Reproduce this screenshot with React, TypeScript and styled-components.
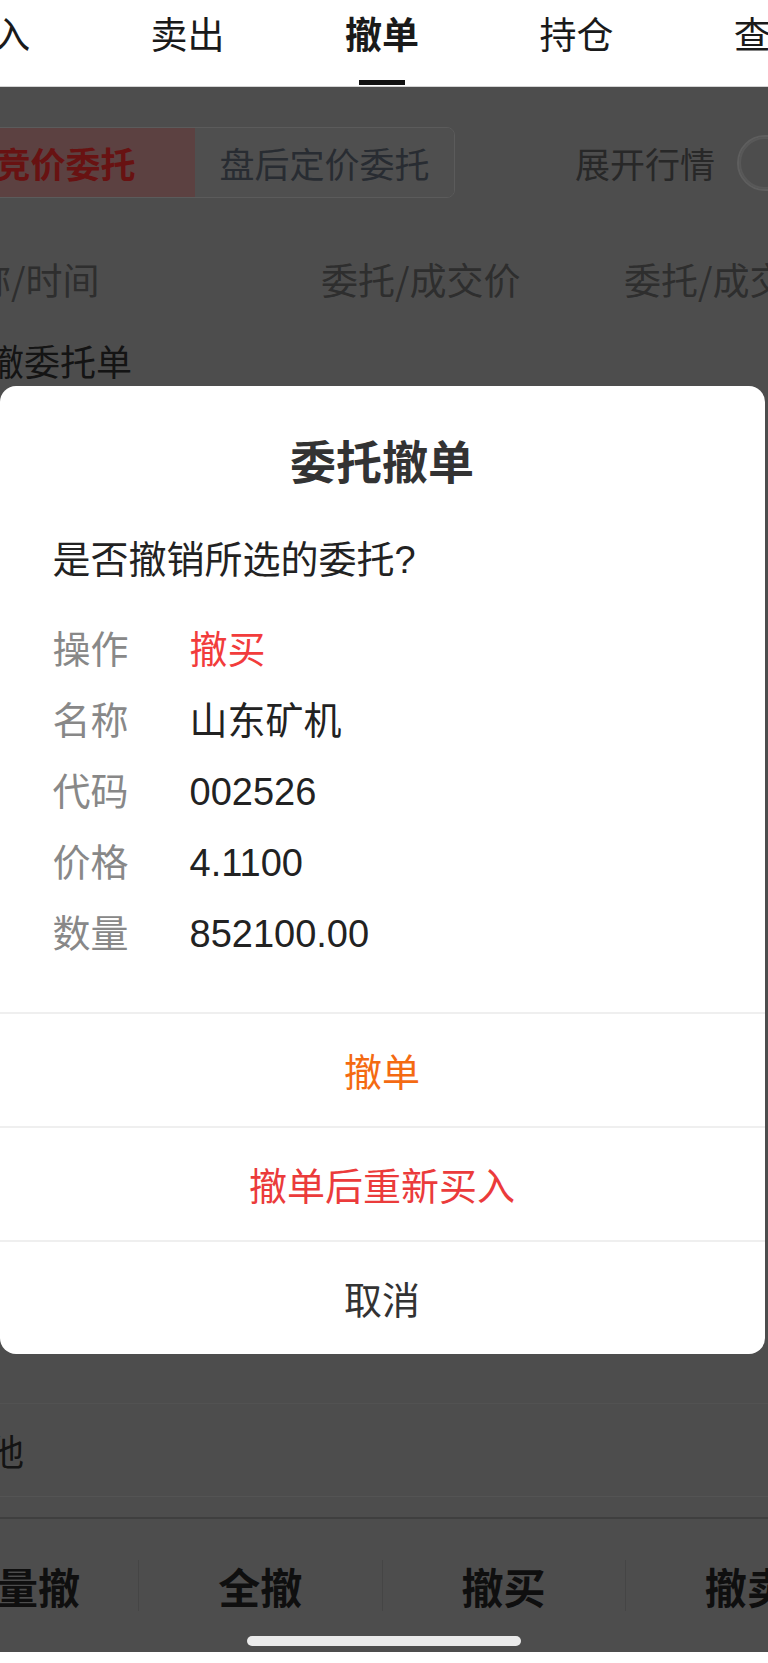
import styled, { createGlobalStyle } from "styled-components";

const GlobalStyle = createGlobalStyle`
  html, body {
    margin: 0;
    padding: 0;
    background: #fff;
    overflow: hidden;
  }
  body {
    font-family: "Liberation Sans", "Noto Sans CJK SC", sans-serif;
    -webkit-font-smoothing: antialiased;
  }
`;

const Viewport = styled.div`
  position: relative;
  width: 768px;
  height: 1663px;
  overflow: hidden;
  background: #fff;
`;

// the app page is wider than the phone crop, centered content sits at -104px
const Page = styled.div`
  position: relative;
  width: 972px;
  height: 1652px;
  margin-left: -104px;
  display: flex;
  flex-direction: column;
  background: #9a9a9a;
`;

const TabBar = styled.nav`
  display: flex;
  flex-shrink: 0;
  height: 86px;
  background: #fff;
  border-bottom: 1px solid #d4d4d4;
`;

const Tab = styled.div<{ $active?: boolean }>`
  flex: 1;
  display: flex;
  flex-direction: column;
  align-items: center;
  padding-top: 14px;
  font-size: 37px;
  line-height: 46px;
  color: #1a1a1a;
  font-weight: ${(p) => (p.$active ? 700 : 400)};
`;

const TabIndicator = styled.span`
  margin-top: auto;
  margin-bottom: 1px;
  width: 46px;
  height: 5px;
  background: #111;
`;

const FilterRow = styled.div`
  display: flex;
  align-items: center;
  justify-content: space-between;
  margin-top: 40px;
  padding: 0 39px;
  height: 71px;
`;

const Segment = styled.div`
  display: flex;
  height: 71px;
  border-radius: 8px;
  overflow: hidden;
  border: 1.5px solid #b6b6b6;
  box-sizing: border-box;
`;

const SegItem = styled.div<{ $active?: boolean }>`
  width: 259px;
  display: flex;
  align-items: center;
  justify-content: center;
  font-size: 35px;
  font-weight: ${(p) => (p.$active ? 700 : 400)};
  color: ${(p) => (p.$active ? "#d02424" : "#505864")};
  background: ${(p) => (p.$active ? "#b88282" : "#9e9e9e")};
`;

const Expand = styled.div`
  display: flex;
  align-items: center;
  gap: 22px;
  font-size: 35px;
  color: #505050;
`;

const Switch = styled.div`
  width: 92px;
  height: 56px;
  box-sizing: border-box;
  border: 2px solid #bcbcbc;
  border-radius: 28px;
  display: flex;
  align-items: center;
`;

const Knob = styled.span`
  width: 52px;
  height: 52px;
  box-sizing: border-box;
  border-radius: 50%;
  border: 2px solid #b0b0b0;
`;

const HeaderRow = styled.div`
  display: grid;
  grid-template-columns: 384px 303px 1fr;
  margin-top: 56px;
  padding-left: 41px;
  font-family: "Noto Sans CJK SC", sans-serif;
  font-size: 37px;
  line-height: 50px;
  color: #5c5c5c;
  white-space: nowrap;
`;

const SectionTitle = styled.div`
  margin-top: 35px;
  padding-left: 56px;
  font-size: 36px;
  line-height: 50px;
  color: #282828;
`;

const ListArea = styled.div`
  flex: 1;
`;

const FooterRow = styled.div`
  height: 94px;
  box-sizing: border-box;
  display: flex;
  align-items: center;
  padding-left: 56px;
  margin-bottom: 20px;
  border-top: 1px solid #a4a4a4;
  border-bottom: 1px solid #a8a8a8;
  font-size: 36px;
  color: #282828;
`;

const Toolbar = styled.div`
  height: 135px;
  box-sizing: border-box;
  display: flex;
  align-items: center;
  border-top: 2px solid #7e7e7e;
`;

const ToolButton = styled.div`
  flex: 1;
  height: 51px;
  display: flex;
  align-items: center;
  justify-content: center;
  font-size: 42px;
  font-weight: 700;
  color: #1e1e1e;
  & + & {
    border-left: 1.5px solid #8a8a8a;
  }
`;

const Mask = styled.div`
  position: absolute;
  top: 87px;
  left: 0;
  right: 0;
  bottom: 0;
  background: rgba(0, 0, 0, 0.5);
  display: flex;
  align-items: center;
  justify-content: center;
`;

const Dialog = styled.div`
  width: 765px;
  background: #fff;
  border-radius: 16px;
  overflow: hidden;
`;

const DialogBody = styled.div`
  padding: 50px 53px 42px;
`;

const DialogTitle = styled.div`
  text-align: center;
  font-size: 46px;
  font-weight: 700;
  line-height: 54px;
  color: #333;
`;

const Question = styled.div`
  margin-top: 43px;
  font-size: 38px;
  line-height: 54px;
  color: #222;
`;

const InfoList = styled.div`
  margin-top: 28px;
`;

const InfoRow = styled.div`
  display: grid;
  grid-template-columns: 137px 1fr;
  height: 71px;
  line-height: 71px;
  font-size: 38px;
`;

const InfoLabel = styled.span`
  color: #888;
`;

const InfoValue = styled.span<{ $color?: string }>`
  color: ${(p) => p.$color || "#222"};
`;

const ActionButton = styled.div<{ $color: string }>`
  height: 114px;
  box-sizing: border-box;
  border-top: 2px solid #efefef;
  display: flex;
  align-items: center;
  justify-content: center;
  font-size: 38px;
  color: ${(p) => p.$color};
`;

const HomeIndicator = styled.div`
  position: absolute;
  left: 247px;
  top: 1636px;
  width: 274px;
  height: 10px;
  border-radius: 5px;
  background: #ebebeb;
`;

const tabs = ["买入", "卖出", "撤单", "持仓", "查询"];

const orderInfo = [
  { label: "操作", value: "撤买", color: "#f23c3c" },
  { label: "名称", value: "山东矿机" },
  { label: "代码", value: "002526" },
  { label: "价格", value: "4.1100" },
  { label: "数量", value: "852100.00" },
];

const App = () => {
  return (
    <Viewport>
      <GlobalStyle />
      <Page>
        <TabBar>
          {tabs.map((t) => (
            <Tab key={t} $active={t === "撤单"}>
              {t}
              {t === "撤单" && <TabIndicator />}
            </Tab>
          ))}
        </TabBar>
        <FilterRow>
          <Segment>
            <SegItem $active>竞价委托</SegItem>
            <SegItem>盘后定价委托</SegItem>
          </Segment>
          <Expand>
            展开行情
            <Switch>
              <Knob />
            </Switch>
          </Expand>
        </FilterRow>
        <HeaderRow>
          <span>名称/时间</span>
          <span>委托/成交价</span>
          <span>委托/成交量</span>
        </HeaderRow>
        <SectionTitle>可撤委托单</SectionTitle>
        <ListArea />
        <FooterRow>其他</FooterRow>
        <Toolbar>
          <ToolButton>批量撤</ToolButton>
          <ToolButton>全撤</ToolButton>
          <ToolButton>撤买</ToolButton>
          <ToolButton>撤卖</ToolButton>
        </Toolbar>

        <Mask>
          <Dialog>
            <DialogBody>
              <DialogTitle>委托撤单</DialogTitle>
              <Question>是否撤销所选的委托?</Question>
              <InfoList>
                {orderInfo.map((row) => (
                  <InfoRow key={row.label}>
                    <InfoLabel>{row.label}</InfoLabel>
                    <InfoValue $color={row.color}>{row.value}</InfoValue>
                  </InfoRow>
                ))}
              </InfoList>
            </DialogBody>
            <ActionButton $color="#f46a12">撤单</ActionButton>
            <ActionButton $color="#eb3b3b">撤单后重新买入</ActionButton>
            <ActionButton $color="#333">取消</ActionButton>
          </Dialog>
        </Mask>
      </Page>
      <HomeIndicator />
    </Viewport>
  );
};

export default App;
